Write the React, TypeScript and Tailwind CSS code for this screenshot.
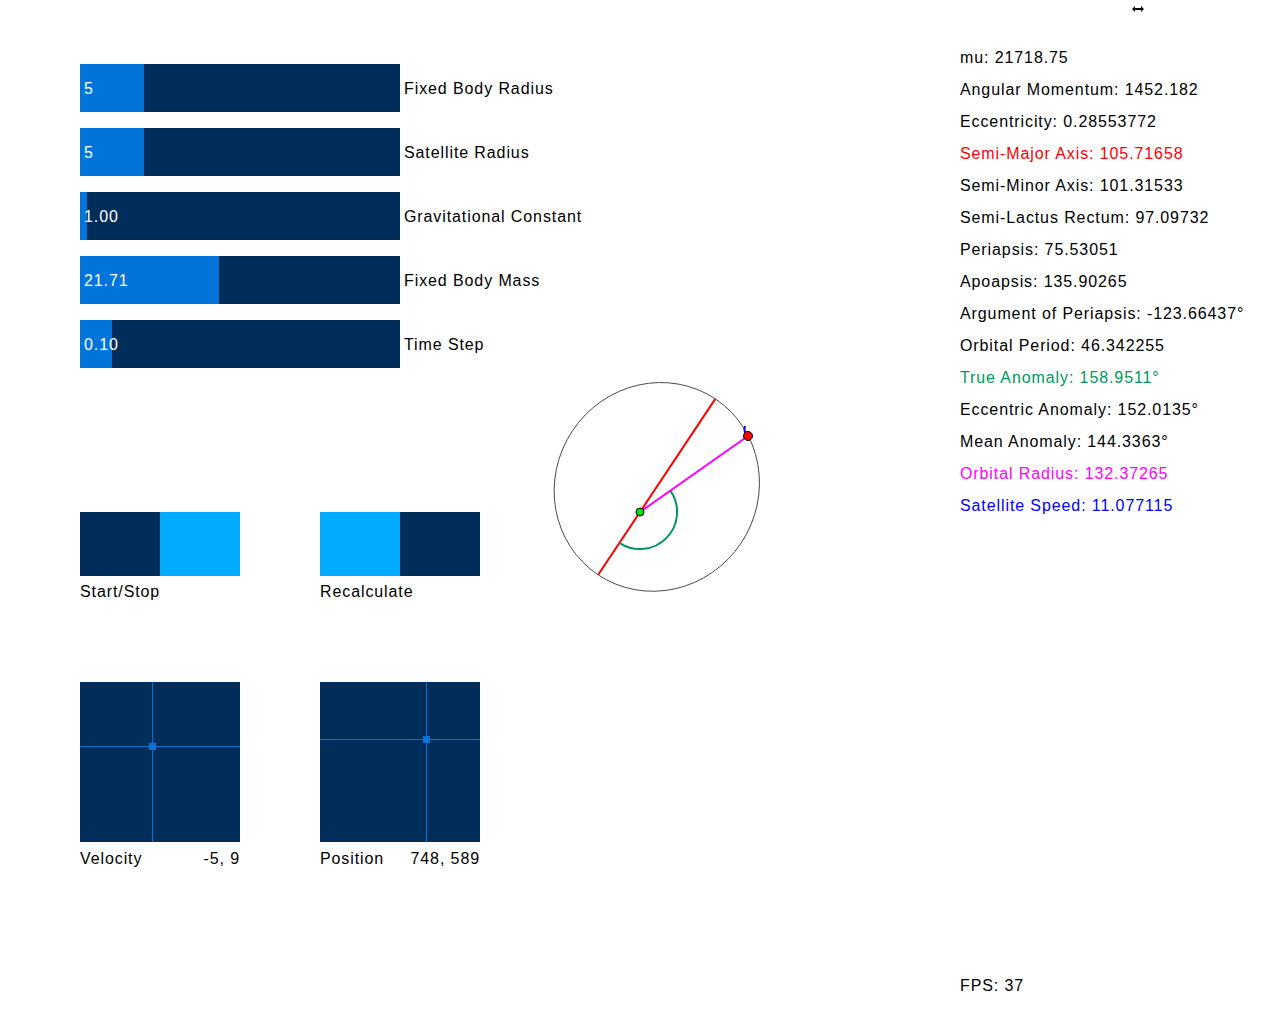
import React from "react";

const font = { fontFamily: '"Liberation Sans", Arial, sans-serif' };

const sliders = [
  { value: "5", fill: 64, label: "Fixed Body Radius" },
  { value: "5", fill: 64, label: "Satellite Radius" },
  { value: "1.00", fill: 7, label: "Gravitational Constant" },
  { value: "21.71", fill: 139, label: "Fixed Body Mass" },
  { value: "0.10", fill: 32, label: "Time Step" },
];

const readouts = [
  { text: "mu: 21718.75", color: "text-black" },
  { text: "Angular Momentum: 1452.182", color: "text-black" },
  { text: "Eccentricity: 0.28553772", color: "text-black" },
  { text: "Semi-Major Axis: 105.71658", color: "text-[#ff0000]" },
  { text: "Semi-Minor Axis: 101.31533", color: "text-black" },
  { text: "Semi-Lactus Rectum: 97.09732", color: "text-black" },
  { text: "Periapsis: 75.53051", color: "text-black" },
  { text: "Apoapsis: 135.90265", color: "text-black" },
  { text: "Argument of Periapsis: -123.66437°", color: "text-black" },
  { text: "Orbital Period: 46.342255", color: "text-black" },
  { text: "True Anomaly: 158.9511°", color: "text-[#00995a]" },
  { text: "Eccentric Anomaly: 152.0135°", color: "text-black" },
  { text: "Mean Anomaly: 144.3363°", color: "text-black" },
  { text: "Orbital Radius: 132.37265", color: "text-[#ff00ff]" },
  { text: "Satellite Speed: 11.077115", color: "text-[#0000ff]" },
];

function Slider({ value, fill, label }: { value: string; fill: number; label: string }) {
  return (
    <div className="flex h-12 items-center">
      <div className="relative flex h-12 w-[320px] shrink-0 items-center bg-[#002d5a]">
        <div className="h-full bg-[#0074d9]" style={{ width: fill }} />
        <span className="absolute left-1 top-[15px] leading-5 text-white">{value}</span>
      </div>
      <span className="ml-1 mt-[2px] whitespace-nowrap text-black">{label}</span>
    </div>
  );
}

function Toggle({ label, on }: { label: string; on: "left" | "right" }) {
  return (
    <div className="w-40">
      <div className="flex h-16">
        <div className={on === "left" ? "w-20 bg-[#00aaff]" : "w-20 bg-[#002d5a]"} />
        <div className={on === "right" ? "w-20 bg-[#00aaff]" : "w-20 bg-[#002d5a]"} />
      </div>
      <p className="mt-[6px] h-5 leading-5 text-black">{label}</p>
    </div>
  );
}

function Pad({ label, value, x, y }: { label: string; value: string; x: number; y: number }) {
  return (
    <div className="w-40">
      <svg width="160" height="160" className="block bg-[#002d5a]">
        <line x1={x + 0.5} y1="0" x2={x + 0.5} y2="160" stroke="#0074d9" strokeWidth="1" />
        <line x1="0" y1={y + 0.5} x2="160" y2={y + 0.5} stroke="#0074d9" strokeWidth="1" />
        <rect x={x - 3} y={y - 3} width="7" height="7" fill="#0074d9" />
      </svg>
      <div className="mt-[7px] flex h-5 justify-between whitespace-nowrap leading-5 text-black">
        <span>{label}</span>
        <span>{value}</span>
      </div>
    </div>
  );
}

function Orbit() {
  // drawing box placed at (544,376); focus of the orbit sits at (640,512)
  const ox = 544;
  const oy = 376;
  const fx = 640 - ox;
  const fy = 512 - oy;
  const cx = 656.8 - ox;
  const cy = 486.9 - oy;
  return (
    <svg width="230" height="230" className="block">
      <ellipse
        cx={cx}
        cy={cy}
        rx="105.7"
        ry="101.3"
        fill="none"
        stroke="#333"
        strokeWidth="0.8"
        transform={`rotate(-56.34 ${cx} ${cy})`}
      />
      <line x1={598.2 - ox} y1={574.8 - oy} x2={715.3 - ox} y2={398.9 - oy} stroke="#ff0000" strokeWidth="2" />
      <path
        d={`M ${619.5 - ox} ${542.8 - oy} A 37 37 0 0 0 ${670.3 - ox} ${490.7 - oy}`}
        fill="none"
        stroke="#00995a"
        strokeWidth="2"
      />
      <line x1={fx} y1={fy} x2={748 - ox} y2={436 - oy} stroke="#ff00ff" strokeWidth="2" />
      <path
        d={`M ${748 - ox} ${436 - oy} Q ${743 - ox} ${432 - oy} ${745 - ox} ${426 - oy}`}
        fill="none"
        stroke="#0000ff"
        strokeWidth="2"
      />
      <circle cx={748 - ox} cy={436 - oy} r="4.5" fill="#ff0000" stroke="#000" strokeWidth="1" />
      <circle cx={fx} cy={fy} r="4" fill="#00dd00" stroke="#000" strokeWidth="1" />
    </svg>
  );
}

export default function App() {
  return (
    <div className="relative h-[1024px] w-[1280px] bg-white text-[16px] tracking-[0.9px]" style={font}>
      <svg width="12" height="6" viewBox="0 0 12 6" className="absolute left-[1132px] top-[6px]">
        <path d="M0 3 L3 0 L3 2 L9 2 L9 0 L12 3 L9 6 L9 4 L3 4 L3 6 Z" fill="#000" />
      </svg>
      <div className="flex">
        <div className="flex w-[474px] shrink-0 flex-col pl-20 pt-16">
          <div className="flex flex-col gap-4">
            {sliders.map((s) => (
              <Slider key={s.label} {...s} />
            ))}
          </div>
          <div className="mt-[144px] flex gap-20">
            <Toggle label="Start/Stop" on="right" />
            <Toggle label="Recalculate" on="left" />
          </div>
          <div className="mt-[80px] flex gap-20">
            <Pad label="Velocity" value="-5, 9" x={72} y={64} />
            <Pad label="Position" value="748, 589" x={106} y={57} />
          </div>
        </div>
        <div className="ml-[70px] w-[416px] shrink-0 pt-[376px]">
          <Orbit />
        </div>
        <div className="flex h-[1024px] flex-col pt-[42px]">
          {readouts.map((r) => (
            <p key={r.text} className={`h-8 whitespace-nowrap leading-8 ${r.color}`}>
              {r.text}
            </p>
          ))}
          <p className="mb-[22px] mt-auto h-8 leading-8 text-black">FPS: 37</p>
        </div>
      </div>
    </div>
  );
}
